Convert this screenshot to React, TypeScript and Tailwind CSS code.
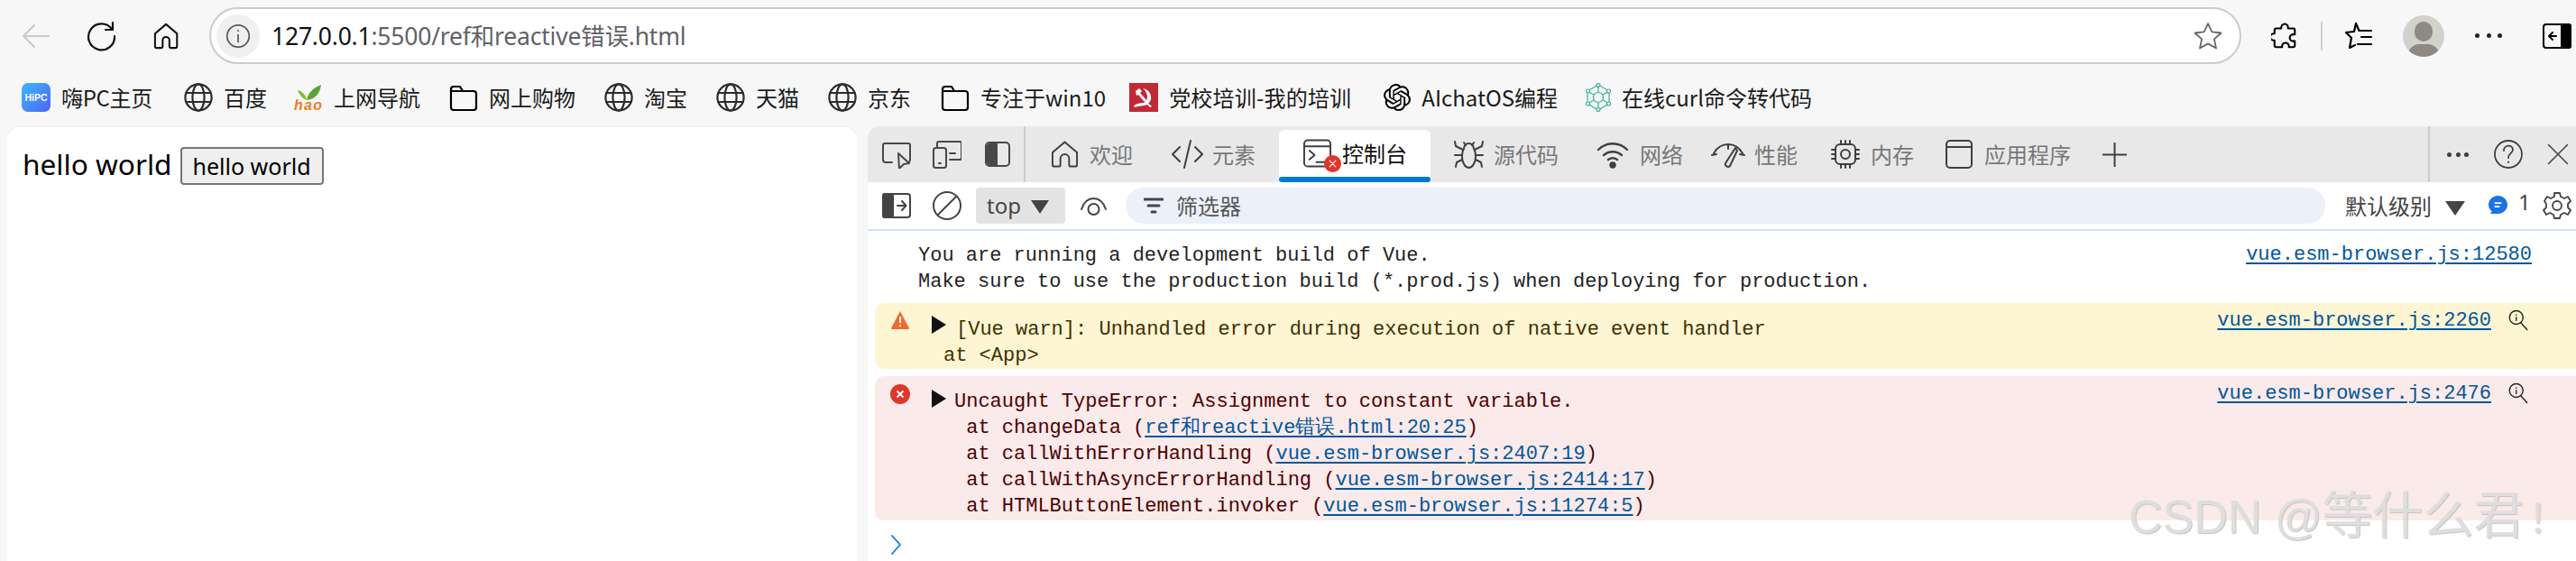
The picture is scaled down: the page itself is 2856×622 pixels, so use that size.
import React from "react";
import { SiOpenai } from "react-icons/si";

type P = { className?: string };
const S = ({ v = "0 0 32 32", className = "", w = 2, children }: { v?: string; className?: string; w?: number; children: React.ReactNode }) => (
  <svg viewBox={v} className={"shrink-0 " + className} fill="none" stroke="currentColor" strokeWidth={w} strokeLinecap="round" strokeLinejoin="round">{children}</svg>
);

const Globe = ({ className = "" }: P) => (
  <S className={"w-[32px] h-[32px] text-[#2b2b2b] " + className} w={2.2}>
    <circle cx="16" cy="16" r="14.6" />
    <ellipse cx="16" cy="16" rx="6.6" ry="14.6" />
    <path d="M2.5 11h27M2.5 21h27" />
  </S>
);
const Folder = () => (
  <S className="w-[32px] h-[32px] text-black" w={2.2}>
    <path d="M2 7a3 3 0 0 1 3-3h7l3 5h12a3 3 0 0 1 3 3v15a3 3 0 0 1-3 3H5a3 3 0 0 1-3-3z" />
    <path d="M2 9h13" />
  </S>
);
const Hao = () => (
  <svg viewBox="0 0 32 32" className="w-[32px] h-[32px] shrink-0 overflow-visible">
    <path d="M14 19C9 17 6 13 4 8c5 1 9 5 10 11z" fill="#8ab92d" />
    <path d="M14 19c1-8 8-14 16-17-1 9-6 16-16 17z" fill="#5aa631" />
    <text x="0" y="30" fontSize="16" fontStyle="italic" fontFamily="'Liberation Sans',sans-serif" fill="#f07a1f" fontWeight="700" textLength="31">hao</text>
  </svg>
);
const Flag = () => (
  <svg viewBox="0 0 32 32" className="w-[32px] h-[32px] shrink-0">
    <rect width="32" height="32" fill="#bf2a36" />
    <path d="M15 6c6 1 10 6 9 12-1 3-2 4-3 5 2 1 3 2 4 3l-2 1-3-3c-5 2-10 1-14 3l-1-2c3-2 7-3 11-3 4-2 5-7 3-11-1-2-2-4-4-5z" fill="#fff" />
    <path d="M7 9l4-3 3 3-2 2 7 8-2 2-7-8-2 1z" fill="#fff" />
  </svg>
);
const Atom = () => (
  <svg viewBox="0 0 28 32" className="w-[28px] h-[32px] shrink-0" fill="none" stroke="#35b39b" strokeWidth="1.2">
    <path d="M14 2L26 9v14L14 30 2 23V9z" />
    <path d="M14 2v28M2 9l24 14M26 9L2 23" />
    <circle cx="14" cy="16" r="5.5" fill="#f7f7f7" />
    <circle cx="14" cy="2.5" r="2" fill="#f7f7f7" /><circle cx="14" cy="29.5" r="2" fill="#f7f7f7" />
    <circle cx="2.5" cy="9" r="2" fill="#f7f7f7" /><circle cx="25.5" cy="9" r="2" fill="#f7f7f7" />
    <circle cx="2.5" cy="23" r="2" fill="#f7f7f7" /><circle cx="25.5" cy="23" r="2" fill="#f7f7f7" />
  </svg>
);

const Mark = ({ className = "", children }: { className?: string; children: React.ReactNode }) => (
  <div className={"flex items-center gap-[12px] shrink-0 whitespace-nowrap " + className}>{children}</div>
);

const Tab = ({ className = "", gap = "gap-[12px]", label, children }: { className?: string; gap?: string; label: string; children: React.ReactNode }) => (
  <div className={"flex items-center shrink-0 whitespace-nowrap text-[#777777] " + gap + " " + className}>
    <span className="flex text-[#3f3f3f]">{children}</span>
    <span>{label}</span>
  </div>
);

const Inspector = () => (
  <div className="flex items-center text-[#484848] shrink-0">
    <S v="0 0 32 32" className="w-[32px] h-[32px]">
      <path d="M11 25H4a3 3 0 0 1-3-3V6a2 2 0 0 1 2-2h26a2 2 0 0 1 2 2v16a3 3 0 0 1-2 3" />
      <path d="M18 15l12 11-6 1-5 5z" />
    </S>
  </div>
);

const Link = ({ children, className = "" }: { children: React.ReactNode; className?: string }) => (
  <span className={"text-[#00569c] underline decoration-2 underline-offset-[3px] whitespace-nowrap " + className}>{children}</span>
);

const Lens = () => (
  <S className="w-[24px] h-[24px] text-[#222222] ml-[18px] mt-[2px]" w={1.8}>
    <circle cx="13" cy="12" r="10" />
    <path d="M20 20l9 10M13 8v.5M13 11.5v5" />
  </S>
);

export default function App() {
  return (
    <div className="relative w-[2856px] h-[622px] overflow-hidden bg-[#f7f7f7] flex flex-col font-['Noto_Sans','Noto_Sans_CJK_SC',sans-serif]">
      {/* browser toolbar */}
      <div className="h-[79px] shrink-0 flex items-center pl-[24px]">
        <S className="w-[32px] h-[32px] text-[#c9c9c9]" w={2}><path d="M30 16H2M14 4L2 16l12 12" /></S>
        <S className="w-[32px] h-[34px] ml-[40px] text-[#111111]" w={2.2}>
          <path d="M28 8a14.5 14.5 0 1 0 3 8" /><path d="M29 1v8h-8" />
        </S>
        <S className="w-[30px] h-[32px] ml-[42px] text-[#111111]" w={2.2}>
          <path d="M15 2L2 13v15a2 2 0 0 0 2 2h5a2 2 0 0 0 2-2v-7a4 4 0 0 1 8 0v7a2 2 0 0 0 2 2h5a2 2 0 0 0 2-2V13z" />
        </S>
        <div className="ml-[32px] w-[2253px] h-[63px] rounded-full border-2 border-[#cccccc] bg-white flex items-center pl-[6px] pr-[19px]">
          <div className="w-[48px] h-[48px] rounded-full bg-[#f0f0f0] flex items-center justify-center">
            <S className="w-[28px] h-[28px] text-[#5a5a5a]" w={2}><circle cx="16" cy="16" r="14" /><path d="M16 14.5v9M16 9v.5" /></S>
          </div>
          <div className="ml-[13px] text-[26.5px] leading-[32px] whitespace-nowrap text-[#5f6368] tracking-[-0.2px]"><span className="text-[#111111]">127.0.0.1</span>:5500/ref和reactive错误.html</div>
          <S className="ml-auto w-[32px] h-[32px] text-[#666666]" w={1.8}><path d="M16 2l4.3 9.4 10.2 1.1-7.6 6.9 2.1 10.1L16 24.4l-9 5.1 2.1-10.1-7.6-6.9 10.2-1.1z" /></S>
        </div>
        <S className="w-[30px] h-[34px] ml-[33px] text-black" w={2.2}>
          <path d="M12 5a4 4 0 0 1 7-2c1 1 1 3 1 4h6a2 2 0 0 1 2 2v5h-2a4 4 0 0 0 0 8h2v5a2 2 0 0 1-2 2h-5v-1a4 4 0 0 0-8 0v1H6a2 2 0 0 1-2-2v-6H3a4 4 0 0 1 0-8h1V9a2 2 0 0 1 2-2h6z" />
        </S>
        <div className="w-[2px] h-[32px] ml-[25px] bg-[#d0d0d0]" />
        <S className="w-[32px] h-[32px] ml-[24px] text-black" w={2.2}>
          <path d="M13 2l3.500 8H19M2 12l9-1M2 12l6 6-2 11 6-3M13 2l-2 9" /><path d="M19 10h11M19 17h11M15 25h15" />
        </S>
        <div className="ml-[33px] w-[46px] h-[46px] rounded-full bg-[#d2d1cc] overflow-hidden flex flex-col items-center shrink-0">
          <div className="w-[20px] h-[22px] rounded-full bg-[#8d8984] mt-[7px] shrink-0" />
          <div className="w-[34px] h-[24px] rounded-full bg-[#8d8984] mt-[3px] shrink-0" />
        </div>
        <div className="ml-[34px] w-[30px] flex justify-between">
          <span className="w-[5px] h-[5px] rounded-full bg-[#222222]" /><span className="w-[5px] h-[5px] rounded-full bg-[#222222]" /><span className="w-[5px] h-[5px] rounded-full bg-[#222222]" />
        </div>
        <S className="w-[32px] h-[28px] ml-[45px] text-black" v="0 0 32 28" w={2}>
          <rect x="1" y="1" width="30" height="26" rx="3" />
          <rect x="21" y="1" width="10" height="26" rx="2" fill="currentColor" />
          <path d="M15 14H7M11 10l-4 4 4 4" />
        </S>
      </div>

      {/* bookmarks */}
      <div className="h-[61px] shrink-0 flex items-start pt-[13px] pl-[24px] text-[24px] leading-[32px] text-[#1a1a1a] font-['Noto_Sans_CJK_SC','Noto_Sans',sans-serif]">
        <Mark>
          <div className="w-[32px] h-[32px] rounded-[7px] bg-gradient-to-br from-[#41b4ff] to-[#4a63f5] flex items-center justify-center text-white text-[10.5px] leading-none font-bold font-['Liberation_Sans',sans-serif]">HiPC</div>
          <span className="tracking-[-0.3px]">嗨PC主页</span>
        </Mark>
        <Mark className="ml-[35px]"><Globe /><span>百度</span></Mark>
        <Mark className="ml-[30px]"><Hao /><span>上网导航</span></Mark>
        <Mark className="ml-[32px]"><Folder /><span>网上购物</span></Mark>
        <Mark className="ml-[32px]"><Globe /><span>淘宝</span></Mark>
        <Mark className="ml-[32px]"><Globe /><span>天猫</span></Mark>
        <Mark className="ml-[32px]"><Globe /><span>京东</span></Mark>
        <Mark className="ml-[33px]"><Folder /><span>专注于win10</span></Mark>
        <Mark className="ml-[26px]"><Flag /><span className="tracking-[0.2px]">党校培训-我的培训</span></Mark>
        <Mark className="ml-[36px]"><SiOpenai className="w-[30px] h-[32px] text-black shrink-0" /><span>AIchatOS编程</span></Mark>
        <Mark className="ml-[31px]"><Atom /><span>在线curl命令转代码</span></Mark>
      </div>

      {/* content */}
      <div className="flex-1 min-h-0 flex pl-[8px] gap-[12px]">
        {/* page */}
        <div className="w-[942px] bg-white rounded-t-[14px] border-t border-[#ececec] pl-[17px] pt-[22px] flex items-start text-black">
          <span className="text-[31.6px] leading-[42px] whitespace-nowrap mt-[-2px]">hello world</span>
          <button className="ml-[9px] w-[159px] h-[42px] rounded-[4px] border-2 border-[#767676] bg-[#efefef] text-[25px] leading-none text-black flex items-center justify-center">hello world</button>
        </div>

        {/* devtools */}
        <div className="flex-1 min-w-0 flex flex-col bg-white rounded-tl-[14px] overflow-hidden font-['Noto_Sans_CJK_SC','Noto_Sans',sans-serif]">
          {/* tab strip */}
          <div className="h-[62px] shrink-0 bg-[#e8e8e8] flex items-stretch pl-[16px] text-[24px] leading-[32px]">
            <div className="flex items-center">
              <Inspector />
              <S className="w-[32px] h-[32px] ml-[24px] text-[#484848]">
                <path d="M5 8V4a2 2 0 0 1 2-2h23a2 2 0 0 1 2 2v16a2 2 0 0 1-2 2H19" />
                <rect x="1" y="9" width="14" height="22" rx="2.5" />
                <path d="M19 15h6M7 26h2" />
              </S>
              <div className="ml-[26px] w-[28px] h-[28px] rounded-[5px] border-2 border-[#484848] flex overflow-hidden">
                <div className="w-[12px] bg-[#484848]" />
              </div>
            </div>
            <div className="ml-[15px] w-[2px] bg-[#c8ccd4]" />
            <Tab className="ml-[28px]" label="欢迎">
              <S className="w-[31px] h-[32px]"><path d="M16 2L2 14v14a2 2 0 0 0 2 2h5a2 2 0 0 0 2-2v-7a5 5 0 0 1 10 0v7a2 2 0 0 0 2 2h5a2 2 0 0 0 2-2V14z" /></S>
            </Tab>
            <Tab className="ml-[43px]" gap="gap-[10px]" label="元素">
              <S className="w-[35px] h-[32px]" v="0 0 35 32"><path d="M9 8L1 16l8 8M26 8l8 8-8 8M21 1l-7 30" /></S>
            </Tab>
            <div className="ml-[26px] mt-[4px] w-[168px] bg-white rounded-t-[6px] flex flex-col shrink-0">
              <div className="flex-1 flex items-center pl-[27px] gap-[12px] text-[#111111]">
                <span className="relative flex text-[#3f3f3f]">
                  <S className="w-[31px] h-[32px]"><rect x="1" y="1" width="30" height="30" rx="4" /><path d="M1 8h30M7 13l6 5-6 5M15 26h10" /></S>
                  <span className="absolute left-[23px] top-[18px] w-[19px] h-[19px] rounded-full bg-[#e0352b] text-white flex items-center justify-center">
                    <S className="w-[9px] h-[9px]" w={4}><path d="M4 4l24 24M28 4L4 28" /></S>
                  </span>
                </span>
                <span className="whitespace-nowrap">控制台</span>
              </div>
              <div className="h-[6px] bg-[#0078d4] rounded-full" />
            </div>
            <Tab className="ml-[26px]" gap="gap-[11px]" label="源代码">
              <S className="w-[33px] h-[32px]" v="0 0 33 32">
                <path d="M11 10c0-4 3-6 5.500-6S22 6 22 10c2 3 2 6 2 9 0 7-4 12-7.500 12S9 26 9 19c0-3 0-6 2-9z" />
                <path d="M11 3l2 3M22 3l-2 3M1 2l1 5 8 4M32 2l-1 5-8 4M1 17h8M32 17h-8M2 30l1-5 6-3M31 30l-1-5-6-3" />
              </S>
            </Tab>
            <Tab className="ml-[42px]" label="网络">
              <S className="w-[36px] h-[32px]" v="0 0 36 32" w={2.4}>
                <path d="M2 11c9-9 23-9 32 0M8 17c6-5 14-5 20 0M13 22c3-2 7-2 10 0" />
                <circle cx="18" cy="28" r="2.5" fill="currentColor" />
              </S>
            </Tab>
            <Tab className="ml-[31px]" gap="gap-[10px]" label="性能">
              <S className="w-[38px] h-[32px]" v="0 0 38 32">
                <path d="M1 17l5-1M3 15C7 8 12 5 19 5c7 0 12 3 16 10M37 17l-5-1M19 5v5M27 9l-11 17a3 3 0 0 0 5 3L29 12z" />
              </S>
            </Tab>
            <Tab className="ml-[37px]" label="内存">
              <S className="w-[32px] h-[32px]">
                <rect x="5" y="5" width="22" height="22" rx="5" />
                <circle cx="16" cy="16" r="5" />
                <path d="M11 1v4M16 1v4M21 1v4M11 27v4M16 27v4M21 27v4M1 11h4M1 16h4M1 21h4M27 11h4M27 16h4M27 21h4" />
              </S>
            </Tab>
            <Tab className="ml-[35px]" gap="gap-[13px]" label="应用程序">
              <S className="w-[30px] h-[32px]" v="0 0 30 32"><rect x="1" y="1" width="28" height="30" rx="4" /><path d="M1 8h28" /></S>
            </Tab>
            <div className="ml-[35px] flex items-center text-[#3f3f3f]">
              <S className="w-[27px] h-[27px]" v="0 0 27 27"><path d="M13.500 0v27M0 13.500h27" /></S>
            </div>
            <div className="ml-[334px] w-[2px] bg-[#c8ccd4]" />
            <div className="ml-[19px] w-[24px] flex items-center justify-between">
              <span className="w-[5px] h-[5px] rounded-full bg-[#3f3f3f]" /><span className="w-[5px] h-[5px] rounded-full bg-[#3f3f3f]" /><span className="w-[5px] h-[5px] rounded-full bg-[#3f3f3f]" />
            </div>
            <div className="ml-[28px] flex items-center text-[#3f3f3f]">
              <S className="w-[32px] h-[32px]" w={1.8}><circle cx="16" cy="16" r="15" /><path d="M11 12c0-7 10-7 10-1 0 4-5 4-5 9M16 24.500v.5" /></S>
            </div>
            <div className="ml-[27px] flex items-center text-[#3f3f3f]">
              <S className="w-[24px] h-[24px]" w={2}><path d="M2 2l28 28M30 2L2 30" /></S>
            </div>
          </div>

          {/* filter bar */}
          <div className="h-[52px] shrink-0 flex items-center pl-[16px] text-[24px] leading-[32px] text-[#444444]">
            <S className="w-[32px] h-[28px] text-[#444444]" v="0 0 32 28" w={2}>
              <rect x="1" y="1" width="30" height="26" rx="3" />
              <rect x="1" y="1" width="11" height="26" rx="2" fill="currentColor" />
              <path d="M17 14h9M22 9l4.500 5-4.500 5" />
            </S>
            <S className="w-[32px] h-[32px] ml-[24px] text-[#444444]" w={2}><circle cx="16" cy="16" r="15" /><path d="M6 26L26 6" /></S>
            <div className="ml-[16px] w-[99px] h-[40px] rounded-[4px] bg-[#e3e3e3] flex items-center pl-[12px] gap-[11px] font-['Noto_Sans',sans-serif]">
              <span className="text-[#444444]">top</span>
              <span className="w-0 h-0 border-x-[10px] border-x-transparent border-t-[15px] border-t-[#444444] mt-[3px]" />
            </div>
            <S className="w-[31px] h-[32px] ml-[16px] text-[#444444]" v="0 0 31 32" w={2}><path d="M2 20C5 11 10 8 15.500 8S26 11 29 20" /><circle cx="15.500" cy="20" r="6" /></S>
            <div className="ml-[20px] w-[1330px] h-[40px] rounded-full bg-[#ecf0f9] flex items-center pl-[20px] text-[#555555]">
              <S className="w-[22px] h-[22px] text-[#444444]" v="0 0 22 22" w={3}><path d="M1 4h20M5 11h12M9 18h4" /></S>
              <span className="ml-[14px]">筛选器</span>
            </div>
            <span className="ml-[22px]">默认级别</span>
            <span className="ml-[15px] w-0 h-0 border-x-[11px] border-x-transparent border-t-[16px] border-t-[#444444] mt-[6px]" />
            <svg viewBox="0 0 22 22" className="w-[21px] h-[21px] ml-[26px] shrink-0 mt-[-2px]">
              <path d="M11 0c6 0 11 5 11 10.500S17 21 11 21H2l2-3C1.500 16 0 13.500 0 10.500 0 5 5 0 11 0z" fill="#1a73e8" />
              <path d="M7 8.500h8M7 12.500h6" stroke="#fff" strokeWidth="2" />
            </svg>
            <span className="ml-[12px] mt-[-8px] font-['Noto_Sans',sans-serif]">1</span>
            <S className="w-[32px] h-[34px] ml-[13px] text-[#444444]" w={1.8}>
              <path d="M13 2h6l1 4 4 2 4-2 3 5-3 3v4l3 3-3 5-4-2-4 2-1 4h-6l-1-4-4-2-4 2-3-5 3-3v-4L2 11l3-5 4 2 4-2z" />
              <circle cx="16" cy="16" r="5" />
            </S>
          </div>
          <div className="h-[2px] shrink-0 bg-[#d0e1fb]" />

          {/* console */}
          <div className="flex-1 min-h-0 flex flex-col font-['Liberation_Mono',monospace] text-[22px] leading-[29px]">
            <div className="h-[80px] shrink-0 flex pt-[13px] pl-[56px] text-[#1f1f1f] whitespace-pre">
              <div>{"You are running a development build of Vue.\nMake sure to use the production build (*.prod.js) when deploying for production."}</div>
              <div className="ml-auto pr-[49px] mt-[-1px]"><Link>vue.esm-browser.js:12580</Link></div>
            </div>
            <div className="ml-[8px] h-[73px] shrink-0 rounded-l-[10px] bg-[#fef5d3] flex text-[#3f2f00] whitespace-pre">
              <svg viewBox="0 0 22 22" className="w-[22px] h-[22px] ml-[17px] mt-[8px] shrink-0">
                <path d="M11 1l10 19a1 1 0 0 1-1 1H2a1 1 0 0 1-1-1z" fill="#ee6b2f" />
                <path d="M11 7v7M11 16.500v1.500" stroke="#fff" strokeWidth="2" />
              </svg>
              <span className="w-0 h-0 ml-[24px] mt-[14px] border-y-[10px] border-y-transparent border-l-[16px] border-l-[#111111] shrink-0" />
              <div className="pt-[15px] ml-[11px]">
                {"[Vue warn]: Unhandled error during execution of native event handler\n"}<span className="ml-[-14px]">at &lt;App&gt;</span>
              </div>
              <div className="ml-auto pr-[52px] pt-[5px] flex items-start">
                <Link>vue.esm-browser.js:2260</Link><Lens />
              </div>
            </div>
            <div className="ml-[8px] mt-[8px] h-[160px] shrink-0 rounded-l-[10px] bg-[#fbeaea] flex text-[#4e0000] whitespace-pre">
              <svg viewBox="0 0 22 22" className="w-[22px] h-[22px] ml-[17px] mt-[9px] shrink-0">
                <circle cx="11" cy="11" r="11" fill="#e0352b" />
                <path d="M7.500 7.500l7 7M14.500 7.500l-7 7" stroke="#fff" strokeWidth="1.800" />
              </svg>
              <span className="w-0 h-0 ml-[24px] mt-[15px] border-y-[10px] border-y-transparent border-l-[16px] border-l-[#111111] shrink-0" />
              <div className="pt-[14px] ml-[9px]">
                {"Uncaught TypeError: Assignment to constant variable.\n"}
                {" at changeData ("}<Link>ref和reactive错误.html:20:25</Link>{")\n"}
                {" at callWithErrorHandling ("}<Link>vue.esm-browser.js:2407:19</Link>{")\n"}
                {" at callWithAsyncErrorHandling ("}<Link>vue.esm-browser.js:2414:17</Link>{")\n"}
                {" at HTMLButtonElement.invoker ("}<Link>vue.esm-browser.js:11274:5</Link>{")"}
              </div>
              <div className="ml-auto pr-[52px] pt-[5px] flex items-start">
                <Link>vue.esm-browser.js:2476</Link><Lens />
              </div>
            </div>
            <div className="pl-[26px] pt-[16px]">
              <S className="w-[11px] h-[22px] text-[#1a73e8]" v="0 0 11 22" w={1.8}><path d="M1 1l9 10-9 10" /></S>
            </div>
          </div>
        </div>
      </div>

      {/* watermark */}
      <div className="absolute left-[2360px] top-[540px] text-[52px] leading-[64px] whitespace-nowrap text-[#dedede] [text-shadow:1px_1px_1px_#c4c4c4] font-['Liberation_Sans','Noto_Sans_CJK_SC',sans-serif]">CSDN @<span className="text-[56px]">等什么君</span><span className="ml-[4px] text-[44px]">！</span></div>
    </div>
  );
}
